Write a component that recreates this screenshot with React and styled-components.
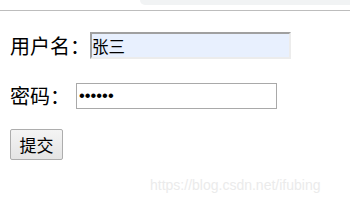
import React from 'react';
import styled, { createGlobalStyle } from 'styled-components';

const GlobalStyle = createGlobalStyle`
  html, body {
    margin: 0;
    padding: 0;
    background: #ffffff;
  }
  body {
    font-family: "Noto Sans CJK SC", "Liberation Sans", sans-serif;
    color: #000000;
  }
`;

const Page = styled.div`
  position: relative;
  width: 350px;
  height: 203px;
  overflow: hidden;
  background: #ffffff;
`;

const TopBar = styled.div`
  display: flex;
  justify-content: flex-end;
  height: 10px;
  border-bottom: 1px solid #bdbdbd;
`;

const Tab = styled.div`
  width: 210px;
  height: 5px;
  background: #f1f3f4;
  border-bottom-left-radius: 8px;
`;

const Form = styled.form`
  display: flex;
  flex-direction: column;
  align-items: flex-start;
  padding: 21px 10px 0;
`;

const Row = styled.div`
  display: flex;
  align-items: center;
  height: 27px;
  margin-top: ${(props) => props.$top || 0}px;
`;

const Label = styled.label`
  font-size: 20px;
  line-height: 27px;
  white-space: nowrap;
`;

const TextInput = styled.input`
  box-sizing: border-box;
  width: 201px;
  height: ${(props) => (props.$autofill ? 27 : 26)}px;
  margin: 0 0 0 ${(props) => props.$offset || 0}px;
  padding: 0 ${(props) => (props.$autofill ? 0 : 2)}px;
  font-family: ${(props) => (props.type === 'password'
    ? '"Liberation Sans", Arial, sans-serif'
    : '"Noto Sans CJK SC", "Liberation Sans", sans-serif')};
  font-size: 16.5px;
  color: #000000;
  outline: none;
  background: ${(props) => (props.$autofill ? '#e8f0fe' : '#ffffff')};
  border: ${(props) => (props.$autofill ? '2px solid' : '1px solid #a9a9a9')};
  border-color: ${(props) => (props.$autofill ? '#a0a0a0 #ececec #ececec #a0a0a0' : '#a9a9a9')};
`;

const SubmitButton = styled.button`
  box-sizing: border-box;
  width: 53px;
  height: 31px;
  margin-top: 20px;
  padding: 0;
  font-family: "Noto Sans CJK SC", "Liberation Sans", sans-serif;
  font-size: 17px;
  line-height: 29px;
  color: #000000;
  background: linear-gradient(#f4f4f4, #e4e4e4);
  border: 1px solid #adadad;
  border-radius: 2px;
`;

const Watermark = styled.div`
  position: absolute;
  left: 150px;
  top: 176px;
  font-family: "Liberation Sans", Arial, sans-serif;
  font-size: 14px;
  line-height: 18px;
  color: #ebebeb;
  pointer-events: none;
`;

export default function App() {
  return (
    <Page>
      <GlobalStyle />
      <TopBar>
        <Tab />
      </TopBar>
      <Form onSubmit={(e) => e.preventDefault()}>
        <Row>
          <Label>用户名：</Label>
          <TextInput $autofill type='text' defaultValue='张三' />
        </Row>
        <Row $top={23}>
          <Label>密码：</Label>
          <TextInput $offset={6} type='password' defaultValue='123456' />
        </Row>
        <SubmitButton type='submit'>提交</SubmitButton>
      </Form>
      <Watermark>https://blog.csdn.net/ifubing</Watermark>
    </Page>
  );
}
